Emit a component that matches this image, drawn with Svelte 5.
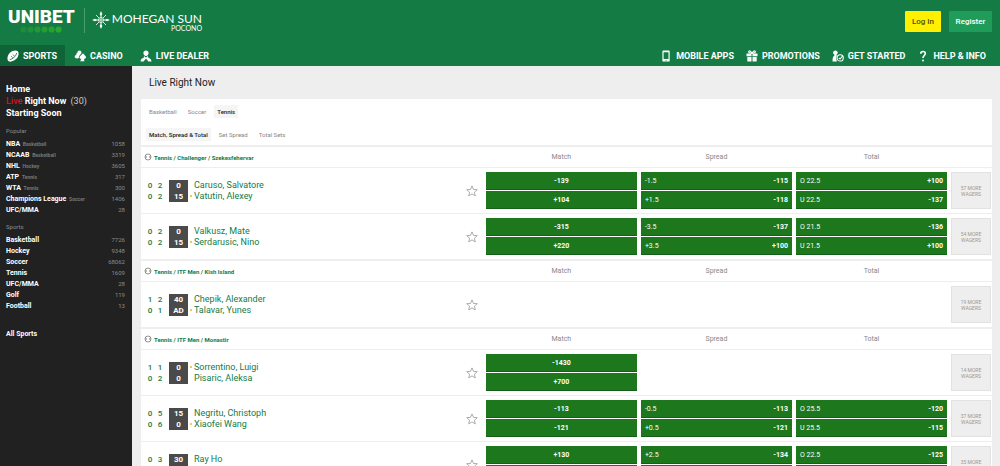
<script>
    const leftNav = [
        { label: 'Sports', icon: 'ball', active: true },
        { label: 'Casino', icon: 'casino' },
        { label: 'Live Dealer', icon: 'dealer' }
    ];

    const rightNav = [
        { label: 'Mobile Apps', icon: 'phone' },
        { label: 'Promotions', icon: 'gift' },
        { label: 'Get Started', icon: 'start' },
        { label: 'Help & Info', icon: 'help' }
    ];

    const popular = [
        { name: 'NBA', sport: 'Basketball', count: 1058 },
        { name: 'NCAAB', sport: 'Basketball', count: 3319 },
        { name: 'NHL', sport: 'Hockey', count: 3605 },
        { name: 'ATP', sport: 'Tennis', count: 317 },
        { name: 'WTA', sport: 'Tennis', count: 300 },
        { name: 'Champions League', sport: 'Soccer', count: 1406 },
        { name: 'UFC/MMA', count: 28 }
    ];

    const sports = [
        { name: 'Basketball', count: 7726 },
        { name: 'Hockey', count: 9348 },
        { name: 'Soccer', count: 68062 },
        { name: 'Tennis', count: 1609 },
        { name: 'UFC/MMA', count: 28 },
        { name: 'Golf', count: 119 },
        { name: 'Football', count: 13 }
    ];

    const groups = [
        {
            title: 'Tennis / Challenger / Szekesfehervar',
            events: [
                {
                    players: ['Caruso, Salvatore', 'Vatutin, Alexey'],
                    sets: [['0', '2'], ['0', '2']], game: ['0', '15'], serve: 1,
                    match: ['-139', '+104'],
                    spread: [['-1.5', '-115'], ['+1.5', '-118']],
                    total: [['O 22.5', '+100'], ['U 22.5', '-137']],
                    more: 57
                },
                {
                    players: ['Valkusz, Mate', 'Serdarusic, Nino'],
                    sets: [['0', '2'], ['0', '2']], game: ['0', '15'], serve: 1,
                    match: ['-315', '+220'],
                    spread: [['-3.5', '-137'], ['+3.5', '+100']],
                    total: [['O 21.5', '-136'], ['U 21.5', '+100']],
                    more: 54
                }
            ]
        },
        {
            title: 'Tennis / ITF Men / Kish Island',
            events: [
                {
                    players: ['Chepik, Alexander', 'Talavar, Yunes'],
                    sets: [['1', '2'], ['0', '1']], game: ['40', 'AD'], serve: 1,
                    match: [], spread: [], total: [],
                    more: 19
                }
            ]
        },
        {
            title: 'Tennis / ITF Men / Monastir',
            events: [
                {
                    players: ['Sorrentino, Luigi', 'Pisaric, Aleksa'],
                    sets: [['1', '1'], ['0', '2']], game: ['0', '0'], serve: 0,
                    match: ['-1430', '+700'], spread: [], total: [],
                    more: 14
                },
                {
                    players: ['Negritu, Christoph', 'Xiaofei Wang'],
                    sets: [['0', '5'], ['0', '6']], game: ['15', '0'], serve: 1,
                    match: ['-113', '-121'],
                    spread: [['-0.5', '-113'], ['+0.5', '-121']],
                    total: [['O 25.5', '-120'], ['U 25.5', '-115']],
                    more: 37
                },
                {
                    players: ['Ray Ho', 'Petr Nouza'],
                    sets: [['0', '3'], ['0', '3']], game: ['30', '0'], serve: 1,
                    match: ['+130', '-180'],
                    spread: [['+2.5', '-134'], ['-2.5', '+100']],
                    total: [['O 22.5', '-125'], ['U 22.5', '-110']],
                    more: 35
                }
            ]
        }
    ];
</script>

{#snippet icon(name)}
    <svg class="icon" viewBox="0 0 12 12" aria-hidden="true">
        {#if name == 'ball'}
            <path d="M1.300 10.900C-.3 9.300.4 5.300 2.900 2.800 5.300.500 9.200-.1 10.800 1.300c1.500 1.600.8 5.300-1.700 7.800-2.500 2.400-6.200 3.300-7.800 1.800z" />
            <path class="cut" d="M2.600 9.700C5.300 9.400 9.200 6.200 9.700 3M4.300 6.200l1.500 1.500M6 4.600l1.500 1.500" />
        {:else if name == 'casino'}
            <path d="M5.500.6c1.300 0 2.100 1 1.900 2.200-.1.500-.3.800-.6 1.100L5 6.200c.2 1.300-.5 2.300-1.800 2.300C1.900 8.600.8 8 .7 6.800.6 5.700 1.400 5 2.400 5c-.5-1 .1-2 1-2.300C3.500 1.500 4.300.6 5.500.6z" />
            <path d="M9 3.200l2.800 3.300c.6 1.500-.4 2.500-1.700 2.200l.2 2.500H6.100l1.200-2.300C5.900 8.900 5.100 7.900 5.800 6.600z" />
        {:else if name == 'dealer'}
            <path d="M6 .4c1.500 0 2.600 1 2.600 2.600S7.500 6 6 6 3.400 4.600 3.400 3 4.500.4 6 .4z" />
            <path d="M4 6.100l2 1.500 2-1.500.3 1.700c1.800.5 3 1.500 3.200 3.600H8.400L6 8.600l-2.400 2.800H.5C.7 9.300 1.900 8.300 3.700 7.800z" />
        {:else if name == 'phone'}
            <path fill-rule="evenodd" d="M3.300.6h5.500c.5 0 .9.4.9.9v9.200c0 .5-.4.900-.9.900H3.300c-.5 0-.9-.4-.9-.9V1.500c0-.5.4-.9.900-.9zM3.600 2.200v6.900h4.900V2.200zM5.300 9.900v.7h1.500v-.7z" />
        {:else if name == 'gift'}
            <path d="M.5 3.500h5v2.800h-5zM6.500 3.500h5v2.800h-5zM1.300 7h4.200v4.500H1.300zM6.500 7h4.200v4.500H6.500z" />
            <path class="line" d="M6 3.300C4.800.7 2.900.3 2.700 1.700 2.600 2.700 4 3.200 6 3.300zM6 3.300C7.200.7 9.100.3 9.300 1.700 9.400 2.700 8 3.200 6 3.300z" />
        {:else if name == 'start'}
            <path d="M3.400.4c1.400 0 2.300 1 2.300 2.200 0 .9-.5 1.700-1.200 2L4.700 6C4 7 3.900 9.500 5.100 11.400H.6C.5 8.500.8 6.600 2.300 5.800L2.400 4.700C1.600 4.300 1.100 3.500 1.100 2.600 1.100 1.400 2 .4 3.400.4z" />
            <circle class="line" cx="8.200" cy="7.900" r="3.100" />
            <path class="line" d="M6.800 7.800l1.200 1.200 3-3.400" />
        {:else if name == 'help'}
            <path class="line thick" d="M3.700 3.800C3.700.6 8.300.8 8.300 3.600 8.300 5.500 6 5.500 6 8" />
            <circle cx="6" cy="10.600" r="1" />
        {/if}
    </svg>
{/snippet}

{#snippet odds(pair)}
    <div class="odds">
        {#each pair as price}
            {#if Array.isArray(price)}
                <button class="price split"><span>{price[0]}</span><b>{price[1]}</b></button>
            {:else}
                <button class="price"><b>{price}</b></button>
            {/if}
        {/each}
    </div>
{/snippet}

<div class="page">
    <header>
        <div class="top">
            <div class="brand">
                <div class="unibet">
                    <span>UNIBET</span>
                    <svg class="dots" viewBox="0 0 42 7" aria-hidden="true">
                        {#each [0, 1, 2, 3, 4, 5] as i}
                            <circle cx={3.5 + i * 7} cy="3.500" r="3.100" opacity={0.35 + i * 0.1} />
                        {/each}
                    </svg>
                </div>
                <div class="mohegan">
                    <svg class="sun" viewBox="0 0 18 18" aria-hidden="true">
                        <path d="M9 0l1.300 3L9 6 7.700 3zM9 12l1.300 3L9 18l-1.300-3zM0 9l3-1.300L6 9l-3 1.300zM12 9l3-1.300L18 9l-3 1.300z" />
                        <path class="ray" d="M9 5v8M5 9h8M4 4l3 3M14 4l-3 3M4 14l3-3M14 14l-3-3" />
                        <circle class="ray" cx="9" cy="9" r="2.500" />
                    </svg>
                    <div class="casino-name">
                        <span>MOHEGAN SUN</span>
                        <small>POCONO</small>
                    </div>
                </div>
            </div>
            <div class="account">
                <button class="login">Log In</button>
                <button class="register">Register</button>
            </div>
        </div>
        <nav>
            <div class="nav-left">
                {#each leftNav as item}
                    <a href="#{item.icon}" class:active={item.active}>{@render icon(item.icon)}{item.label}</a>
                {/each}
            </div>
            <div class="nav-right">
                {#each rightNav as item}
                    <a href="#{item.icon}">{@render icon(item.icon)}{item.label}</a>
                {/each}
            </div>
        </nav>
    </header>

    <div class="content">
        <aside>
            <div class="main-links">
                <a href="#home">Home</a>
                <a href="#live"><span class="live">Live</span> Right Now <span class="live-count">(30)</span></a>
                <a href="#soon">Starting Soon</a>
            </div>
            <h2>Popular</h2>
            <ul>
                {#each popular as item}
                    <li><a href="#popular">{item.name} {#if item.sport}<small>{item.sport}</small>{/if}</a><span class="count">{item.count}</span></li>
                {/each}
            </ul>
            <h2>Sports</h2>
            <ul>
                {#each sports as item}
                    <li><a href="#sports">{item.name}</a><span class="count">{item.count}</span></li>
                {/each}
            </ul>
            <a class="all" href="#all">All Sports</a>
        </aside>

        <main>
            <h1>Live Right Now</h1>
            <div class="filters">
                <div class="tabs">
                    <button>Basketball</button>
                    <button>Soccer</button>
                    <button class="on">Tennis</button>
                </div>
                <div class="tabs lower">
                    <button class="on">Match, Spread &amp; Total</button>
                    <button>Set Spread</button>
                    <button>Total Sets</button>
                </div>
            </div>

            {#each groups as group}
                <section>
                    <div class="group-head cols">
                        <h3>
                            <svg class="tennis" viewBox="0 0 8 8" aria-hidden="true">
                                <circle cx="4" cy="4" r="3" />
                                <path d="M1.500 2.400c1 .6 1 2.600 0 3.200M6.500 2.400c-1 .6-1 2.600 0 3.200" />
                            </svg>
                            {group.title}
                        </h3>
                        <span>Match</span>
                        <span>Spread</span>
                        <span>Total</span>
                    </div>
                    {#each group.events as event}
                        <div class="event cols">
                            <div class="info">
                                <div class="players">
                                    {#each event.players as player, i}
                                        <div class="player">
                                            <span class="set">{event.sets[i][0]}</span>
                                            <span class="set">{event.sets[i][1]}</span>
                                            <span class="game">{event.game[i]}</span>
                                            <span class="serve" class:serving={event.serve == i}></span>
                                            <span class="name">{player}</span>
                                        </div>
                                    {/each}
                                </div>
                                <button class="star" aria-label="Add to favorites">
                                    <svg viewBox="0 0 12 12"><path d="M6 .9l1.500 3.500 3.800.3-2.900 2.500.9 3.700L6 8.900l-3.300 2 .9-3.700L.7 4.700l3.800-.3z" /></svg>
                                </button>
                            </div>
                            {@render odds(event.match)}
                            {@render odds(event.spread)}
                            {@render odds(event.total)}
                            <button class="more">{event.more} MORE WAGERS</button>
                        </div>
                    {/each}
                </section>
            {/each}
        </main>
    </div>
</div>

<style>
    :global(body) {
        margin: 0;
        background: #eee;
    }
    .page {
        display: flex;
        flex-direction: column;
        height: 100vh;
        overflow: hidden;
        font-family: Roboto, "Liberation Sans", sans-serif;
        font-size: 9px;
    }
    button {
        font-family: inherit;
        border: none;
        padding: 0;
        cursor: pointer;
    }
    a {
        color: inherit;
        text-decoration: none;
    }
    h1, h2, h3, ul {
        margin: 0;
        padding: 0;
        list-style: none;
    }

    header {
        flex: none;
        background: #147b45;
        color: #fff;
    }
    .top {
        display: flex;
        justify-content: space-between;
        padding: 8px 8px 0;
        height: 37px;
    }
    .brand {
        display: flex;
        align-items: flex-start;
    }
    .unibet {
        display: flex;
        flex-direction: column;
        align-items: center;
        padding-right: 9px;
        border-right: 1px solid #4b9c70;
        font-size: 19px;
        font-weight: 900;
        line-height: 18px;
    }
    .dots {
        width: 42px;
        height: 7px;
        fill: #2fae2b;
    }
    .mohegan {
        display: flex;
        align-items: flex-start;
        gap: 2px;
        padding: 3px 0 0 7px;
    }
    .sun {
        width: 18px;
        height: 18px;
        fill: #fff;
    }
    .ray {
        fill: none;
        stroke: #fff;
        stroke-width: 0.8;
    }
    .casino-name {
        display: flex;
        flex-direction: column;
        align-items: flex-end;
        padding-top: 2px;
        font-family: Lato, sans-serif;
        font-size: 12px;
        line-height: 12px;
    }
    .casino-name small {
        font-size: 7px;
        line-height: 7px;
    }
    .account {
        display: flex;
        gap: 8px;
        padding-top: 3px;
    }
    .account button {
        height: 21px;
        border-radius: 1px;
        font-size: 8px;
        font-weight: 500;
    }
    .login {
        width: 36px;
        background: #fff000;
        color: #4d4d00;
    }
    .account .register {
        width: 43px;
        background: #1f9c5a;
        color: #fff;
    }
    nav, .nav-left, .nav-right {
        display: flex;
        justify-content: space-between;
    }
    nav a {
        display: flex;
        align-items: center;
        gap: 4px;
        height: 21px;
        font-weight: 700;
        text-transform: uppercase;
    }
    .nav-left {
        gap: 2px;
    }
    .nav-left a {
        padding: 0 8px 0 7px;
    }
    .nav-left .active {
        background: #0e6436;
    }
    .nav-right {
        gap: 12px;
        padding-right: 14px;
    }
    .icon {
        width: 12px;
        height: 12px;
        fill: #fff;
    }
    .cut {
        fill: none;
        stroke: #0e6436;
        stroke-width: 0.8;
    }
    .line {
        fill: none;
        stroke: #fff;
        stroke-width: 1.1;
    }
    .thick {
        stroke-width: 1.6;
    }

    .content {
        display: flex;
        flex: 1;
        min-height: 0;
    }
    aside {
        flex: none;
        box-sizing: border-box;
        width: 132px;
        padding: 17px 7px 0 6px;
        background: #212121;
        color: #fff;
        font-weight: 700;
    }
    .main-links {
        display: flex;
        flex-direction: column;
        line-height: 12px;
    }
    .live {
        color: #d5121e;
        font-weight: 500;
    }
    .live-count {
        margin-left: 2px;
        color: #ccc;
        font-weight: 400;
    }
    h2 {
        margin: 8px 0 3px;
        color: #8c8c8c;
        font-size: 6px;
        font-weight: 400;
        line-height: 8px;
    }
    li {
        display: flex;
        justify-content: space-between;
        align-items: center;
        height: 11px;
        font-size: 7px;
    }
    li small {
        margin-left: 1px;
        color: #777;
        font-size: 5px;
    }
    .count {
        color: #8c8c8c;
        font-size: 6px;
        font-weight: 400;
    }
    .all {
        display: block;
        margin-top: 17px;
        font-size: 7px;
        line-height: 12px;
    }

    main {
        flex: 1;
        min-width: 0;
        padding: 0 8px 0 9px;
        background: #eee;
        overflow: hidden;
    }
    h1 {
        padding: 0 8px;
        color: #222;
        font-size: 10px;
        font-weight: 400;
        line-height: 33px;
    }
    .filters {
        padding: 6px 5px 4px;
        background: #fff;
    }
    .tabs {
        display: flex;
        gap: 5px;
    }
    .tabs.lower {
        margin-top: 10px;
    }
    .tabs button {
        padding: 0 3px;
        height: 13px;
        background: none;
        color: #888;
        font-size: 6px;
    }
    .tabs .on {
        background: #f5f5f5;
        color: #222;
        font-weight: 500;
    }

    section {
        margin-top: 2px;
        background: #fff;
    }
    .cols {
        display: grid;
        grid-template-columns: minmax(0, 9fr) repeat(3, minmax(0, 4fr)) 40px;
        column-gap: 4px;
        padding: 0 1px;
    }
    .group-head {
        align-items: center;
        height: 20px;
        border-bottom: 1px solid #eee;
        color: #888;
        font-size: 7px;
        text-align: center;
    }
    h3 {
        display: flex;
        align-items: center;
        gap: 2px;
        padding-left: 2px;
        color: #147b45;
        font-size: 6px;
        font-weight: 700;
    }
    .tennis {
        width: 8px;
        height: 8px;
        fill: none;
        stroke: #777;
        stroke-width: 0.8;
    }
    .event {
        padding-top: 4px;
        padding-bottom: 4px;
    }
    .event + .event {
        border-top: 1px solid #eee;
    }
    .info {
        display: flex;
        align-items: center;
        justify-content: space-between;
        padding: 0 4px 0 3px;
    }
    .player {
        display: flex;
        align-items: center;
        height: 11px;
        color: #147b45;
    }
    .set {
        width: 10px;
        font-size: 8px;
        font-weight: 500;
        text-align: center;
    }
    .game {
        width: 19px;
        margin-left: 4px;
        background: #4a4a4a;
        color: #fff;
        font-size: 8px;
        font-weight: 700;
        line-height: 11px;
        text-align: center;
    }
    .serve {
        width: 2px;
        height: 2px;
        margin: 0 2px;
        border-radius: 1px;
    }
    .serving {
        background: #e0c020;
    }
    .star {
        width: 12px;
        height: 12px;
        background: none;
    }
    .star svg {
        display: block;
        fill: none;
        stroke: #999;
        stroke-width: 0.8;
    }
    .odds {
        display: flex;
        flex-direction: column;
        gap: 1px;
        height: 37px;
    }
    .price {
        height: 18px;
        padding: 0 4px;
        background: #1d781d;
        border-bottom: 1px solid #14601a;
        color: #fff;
        font-size: 7px;
        text-align: center;
    }
    .split {
        display: flex;
        align-items: center;
        justify-content: space-between;
    }
    .more {
        padding: 0 6px;
        background: #eee;
        border: 1px solid #e2e2e2;
        color: #999;
        font-size: 5px;
        line-height: 6px;
    }
</style>
